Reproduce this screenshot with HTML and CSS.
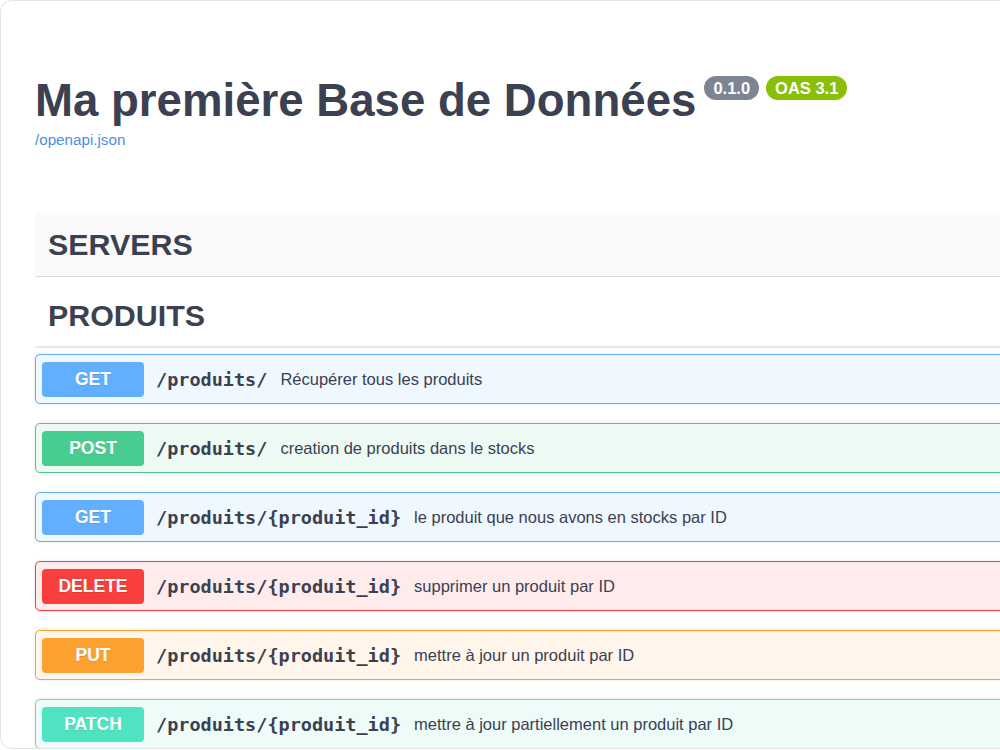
FILE: index.html
```html
<!DOCTYPE html>
<html lang="fr">
<head>
    <meta charset="UTF-8">
    <meta name="viewport" content="width=device-width, initial-scale=1.0">
    <title>Ma première Base de Données - Swagger UI</title>
    <link rel="stylesheet" href="styles.css">
</head>
<body>
    <div class="frame">
        <div class="wrapper">
            <div class="info">
                <h2 class="title">Ma première Base de Données
                    <span class="version-stamp">
                        <span class="version">0.1.0</span>
                        <span class="version oas">OAS 3.1</span>
                    </span>
                </h2>
                <a class="url" href="#">/openapi.json</a>
            </div>

            <div class="scheme-container">
                <h3 class="section-title">SERVERS</h3>
            </div>

            <div class="tag-section">
                <h3 class="section-title tag-title">PRODUITS</h3>

                <div class="opblock opblock-get">
                    <span class="method">GET</span>
                    <span class="path">/produits/</span>
                    <span class="desc">Récupérer tous les produits</span>
                </div>
                <div class="opblock opblock-post">
                    <span class="method">POST</span>
                    <span class="path">/produits/</span>
                    <span class="desc">creation de produits dans le stocks</span>
                </div>
                <div class="opblock opblock-get">
                    <span class="method">GET</span>
                    <span class="path">/produits/{produit_id}</span>
                    <span class="desc">le produit que nous avons en stocks par ID</span>
                </div>
                <div class="opblock opblock-delete">
                    <span class="method">DELETE</span>
                    <span class="path">/produits/{produit_id}</span>
                    <span class="desc">supprimer un produit par ID</span>
                </div>
                <div class="opblock opblock-put">
                    <span class="method">PUT</span>
                    <span class="path">/produits/{produit_id}</span>
                    <span class="desc">mettre à jour un produit par ID</span>
                </div>
                <div class="opblock opblock-patch">
                    <span class="method">PATCH</span>
                    <span class="path">/produits/{produit_id}</span>
                    <span class="desc">mettre à jour partiellement un produit par ID</span>
                </div>
            </div>
        </div>
    </div>
</body>
</html>
```

FILE: styles.css
```css
* {
    margin: 0;
    padding: 0;
    box-sizing: border-box;
}

body {
    font-family: "Liberation Sans", Arial, sans-serif;
    background: white;
    color: #3b4151;
    overflow: hidden;
}

/* cadre arrondi autour de la page */
.frame {
    width: 1120px;
    height: 749px;
    border: 1px solid #e4e4e4;
    border-radius: 12px;
    overflow: hidden;
    background: white;
}

.wrapper {
    padding: 0 0 0 34px;
}

.info {
    padding-top: 72px;
    height: 212px;
}

.title {
    font-size: 45.6px;
    font-weight: bold;
    color: #3b4151;
    line-height: 56px;
    display: flex;
    align-items: flex-start;
}

.version-stamp {
    display: flex;
    gap: 7px;
    margin-left: 8px;
    margin-top: 3px;
}

.version {
    display: inline-block;
    background: #7d8492;
    color: white;
    font-size: 16.5px;
    font-weight: bold;
    line-height: 24px;
    padding: 0 9px;
    border-radius: 12px;
}

.version.oas {
    background: #89bf04;
}

.url {
    display: block;
    font-size: 15.2px;
    color: #4990e2;
    text-decoration: none;
    line-height: 18px;
    margin-top: 2px;
}

.scheme-container {
    background: #fafafa;
    border-bottom: 1px solid #d8dade;
    height: 64px;
    padding: 14px 0 0 13px;
}

.section-title {
    font-size: 30.4px;
    font-weight: bold;
    line-height: 34px;
    color: #3b4151;
}

.tag-title {
    padding: 21px 0 0 13px;
    height: 71px;
    border-bottom: 2px solid #e6e6e6;
    margin-bottom: -13px;
}

.tag-section {
    display: flex;
    flex-direction: column;
    gap: 19px;
}

.opblock {
    height: 50px;
    border: 1px solid;
    border-radius: 5px;
    display: flex;
    align-items: center;
    padding: 0 6px;
    box-shadow: 0 0 3px rgba(0, 0, 0, 0.12);
}

.method {
    width: 102px;
    height: 35px;
    border-radius: 4px;
    color: white;
    font-size: 17.5px;
    font-weight: bold;
    display: flex;
    align-items: center;
    justify-content: center;
    text-shadow: 0 1px 0 rgba(0, 0, 0, 0.1);
    flex-shrink: 0;
}

.path {
    font-family: "DejaVu Sans Mono", monospace;
    font-weight: bold;
    font-size: 18.5px;
    color: #3b4151;
    padding: 0 13px 0 12px;
    white-space: nowrap;
}

.desc {
    font-size: 16.5px;
    color: #3b4151;
    white-space: nowrap;
}

.opblock-get {
    background: #eff7ff;
    border-color: #61affe;
}
.opblock-get .method { background: #61affe; }

.opblock-post {
    background: #edfaf4;
    border-color: #49cc90;
}
.opblock-post .method { background: #49cc90; }

.opblock-delete {
    background: #feebeb;
    border-color: #f93e3e;
}
.opblock-delete .method { background: #f93e3e; }

.opblock-put {
    background: #fff5ea;
    border-color: #fca130;
}
.opblock-put .method { background: #fca130; }

.opblock-patch {
    background: #edfcf9;
    border-color: #50e3c2;
}
.opblock-patch .method { background: #50e3c2; }
```
